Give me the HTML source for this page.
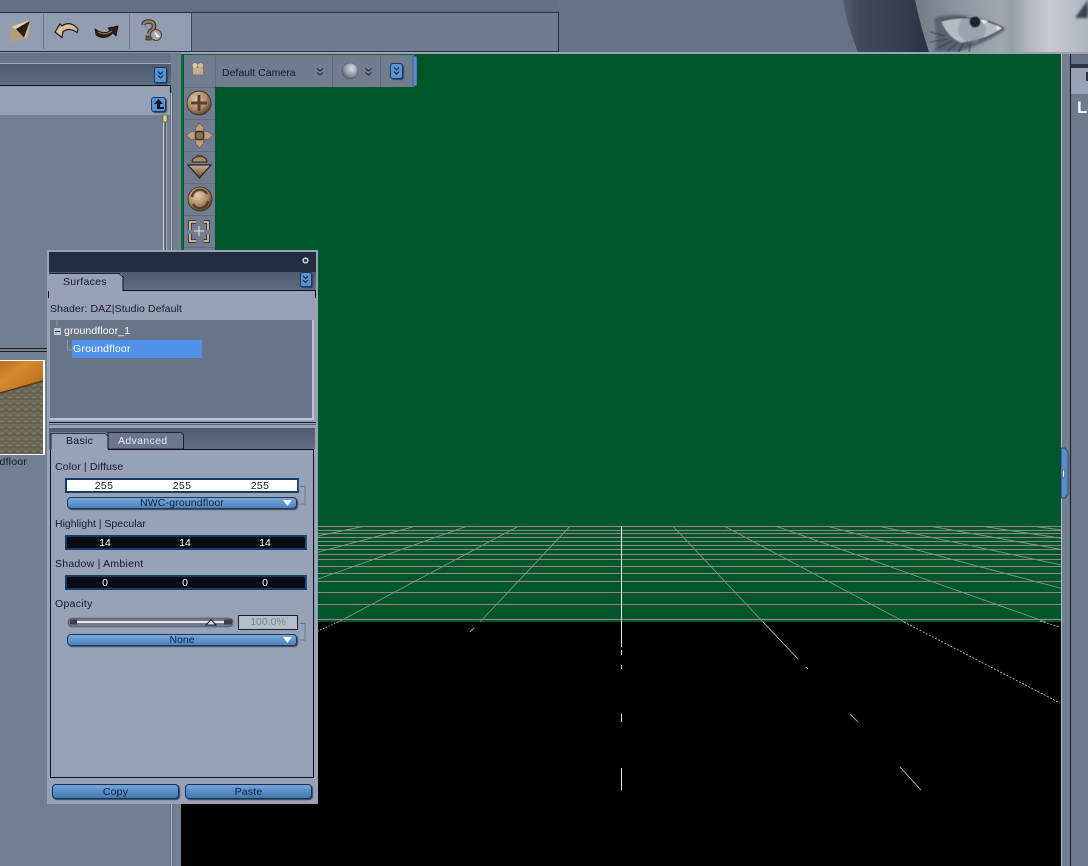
<!DOCTYPE html>
<html>
<head>
<meta charset="utf-8">
<style>
html,body{margin:0;padding:0;background:#6f7a8d;}
#r{position:relative;width:1088px;height:866px;overflow:hidden;font-family:"Liberation Sans",sans-serif;font-size:10.5px;color:#141824;background:#6f7a8d;}
#r div{position:absolute;box-sizing:border-box;}
.t{white-space:nowrap;line-height:12px;}
.c{transform:translateX(-50%);}
.fld{border:2px solid #123a6a;border-right-color:#1d4f8c;}
.dd{height:12px;border:1px solid #1a3a66;border-radius:4px;background:linear-gradient(#7aa6d6,#5c93cc 60%,#4d82bc);box-shadow:1px 1px 1px #3a4354;text-align:center;line-height:10px;color:#10203a;}
.btn{height:15px;border:1px solid #123058;border-radius:4px;background:linear-gradient(#76a4d6,#5389c4 60%,#447ab4);box-shadow:1px 1px 1px #3a4354;text-align:center;line-height:14px;letter-spacing:.2px;color:#10203a;}
.chev{border:1px solid #173a68;border-radius:2px;background:#5b93d0;box-shadow:1px 1px 1px #39414f;}
svg{position:absolute;left:0;top:0;}
</style>
</head>
<body>
<div id="r">
<svg width="1088" height="866" viewBox="0 0 1088 866">
<defs>
<linearGradient id="skin" gradientUnits="userSpaceOnUse" x1="915" x2="1088" y1="0" y2="0"><stop offset="0" stop-color="#747986"/><stop offset=".25" stop-color="#8f94a0"/><stop offset=".5" stop-color="#a3a7b1"/><stop offset=".56" stop-color="#989ca8"/><stop offset=".66" stop-color="#b6b9c2"/><stop offset=".78" stop-color="#c8cad0"/><stop offset="1" stop-color="#b2b5bf"/></linearGradient>
<linearGradient id="hair" x1="0" x2="1" y1="0" y2="0"><stop offset="0" stop-color="#565f71"/><stop offset=".18" stop-color="#414a5b"/><stop offset=".7" stop-color="#363d4e"/><stop offset="1" stop-color="#2c3241"/></linearGradient>
<radialGradient id="br" cx=".4" cy=".35" r=".7"><stop offset="0" stop-color="#e2cdb0"/><stop offset=".6" stop-color="#a98a68"/><stop offset="1" stop-color="#4d3a28"/></radialGradient>
<radialGradient id="ball" cx=".6" cy=".35" r=".75"><stop offset="0" stop-color="#d9dde4"/><stop offset=".5" stop-color="#99a1af"/><stop offset="1" stop-color="#474f5f"/></radialGradient>
<linearGradient id="thumbTop" x1="0" x2="1" y1="0" y2="1"><stop offset="0" stop-color="#b9701f"/><stop offset=".35" stop-color="#d58a2f"/><stop offset=".75" stop-color="#c0741f"/><stop offset="1" stop-color="#8a3c10"/></linearGradient>
<pattern id="cob" patternUnits="userSpaceOnUse" width="8" height="6"><rect width="8" height="6" fill="#686653"/><ellipse cx="2" cy="1.500" rx="2" ry="1.200" fill="#7b7965"/><ellipse cx="6" cy="4.500" rx="2" ry="1.200" fill="#74725e"/><path d="M0 3H8" stroke="#504e3f" stroke-width=".6"/></pattern>
<linearGradient id="tabbar" x1="0" x2="0" y1="0" y2="1"><stop offset="0" stop-color="#4f5a6e"/><stop offset="1" stop-color="#626d82"/></linearGradient>
<linearGradient id="arrow" x1="0" x2="0" y1="0" y2="1"><stop offset="0" stop-color="#d0b898"/><stop offset="1" stop-color="#5c452e"/></linearGradient>
<filter id="b05" x="-20%" y="-20%" width="140%" height="140%"><feGaussianBlur stdDeviation=".5"/></filter>
<filter id="b1" x="-30%" y="-30%" width="160%" height="160%"><feGaussianBlur stdDeviation="1.200"/></filter>
<clipPath id="face"><rect x="843" y="0" width="245" height="52"/></clipPath>
<clipPath id="vpg"><rect x="318" y="526" width="743" height="97"/></clipPath>
</defs>

<!-- top chrome -->
<rect width="1088" height="52" fill="#687285"/>
<rect x="0" y="0" width="558" height="12" fill="#667084"/>
<rect x="0" y="12" width="558" height="1" fill="#283040"/>
<rect x="0" y="13" width="191" height="38" fill="#929db3"/>
<rect x="191" y="13" width="367" height="38" fill="#727c90"/>
<rect x="191" y="13" width="1" height="38" fill="#3b4454"/>
<rect x="558" y="12" width="1" height="40" fill="#283040"/>
<rect x="0" y="51" width="558" height="1" fill="#283040"/>
<rect x="43" y="14" width="1" height="35" fill="#6a7488"/>
<rect x="129" y="14" width="1" height="35" fill="#6a7488"/>

<!-- face -->
<g clip-path="url(#face)">
<rect x="915" y="0" width="173" height="52" fill="url(#skin)"/>
<path d="M843 0L915 0Q921 28 929 52L858 52Q847 25 843 0Z" fill="url(#hair)"/>
<path d="M934 18Q965 8 1006 29Q985 44 958 52L934 52Q938 34 934 18Z" fill="#5b6170" filter="url(#b1)"/>
<g filter="url(#b05)">
<path d="M941 21Q973 12 1003 28Q985 41 962 43Q948 38 941 21Z" fill="#b7bac3"/>
<ellipse cx="972" cy="29" rx="14" ry="13.500" fill="#9da2ae"/>
<path d="M941 21Q973 12 1003 28" fill="none" stroke="#3c4150" stroke-width="1.200"/>
<path d="M962 43Q985 41 1003 28" fill="none" stroke="#4d5261" stroke-width="1.200"/>
<circle cx="975" cy="22" r="5.500" fill="#1c2029"/>
<path d="M980 19L988 21L984 24Z" fill="#eff0f3"/>
<path d="M996 25L1002 28L997 31Z" fill="#dfe1e6"/>
<g stroke="#2e3340" stroke-width=".8" fill="none"><path d="M945 36L930 32M948 39L930 42M952 41L938 48M957 43L947 52M963 44L958 53M970 44L969 53"/></g>
</g>
<path d="M1075 18Q1082 8 1088 0L1088 18Z" fill="#3c4150" filter="url(#b1)"/>
</g>

<rect x="0" y="52" width="1088" height="2" fill="#9aa4b8"/>
<rect x="0" y="52" width="181" height="814" fill="#737e91"/>
<rect x="0" y="52" width="181" height="1" fill="#8c96aa"/>

<!-- viewport -->
<rect x="181" y="54" width="880" height="569" fill="#00562b"/>
<rect x="181" y="622" width="880" height="244" fill="#000"/>
<g stroke="#8c8985" stroke-width="1" fill="none" shape-rendering="crispEdges">
<path d="M318 526.500H1061M318 530.500H1061M318 533.500H1061M318 537.500H1061M318 541.500H1061M318 545.500H1061M318 549.500H1061M318 554.500H1061M318 559.500H1061M318 566.500H1061M318 573.500H1061M318 581.500H1061M318 592.500H1061M318 604.500H1061M318 619.500H1061"/>
</g>
<g clip-path="url(#vpg)" stroke="#8c8f8a" stroke-width=".9" fill="none">
<path d="M570.200 526L480 622M518.900 526L338.500 622M467.600 526L197 622M416.300 526L55.500 622M365 526L-86 622M672.800 526L763 622M724.100 526L904.500 622M775.400 526L1046 622M826.700 526L1187.500 622M878 526L1329 622M929.300 526L1470.500 622M980.600 526L1612 622M1031.900 526L1753.500 622"/>
</g>
<g fill="none" stroke="#e8e8e8">
<path d="M621.500 526V647M621.500 650V655M621.500 665V669M621.500 714V722M621.500 768V790"/>
</g>
<g fill="none" stroke="#c8c8c8" stroke-width=".8">
<path d="M904 622L1060 703" stroke-dasharray="2 1.500"/>
<path d="M1040 621L1060 627" stroke-dasharray="2 1.500"/>
<path d="M763 622L798 659M806 667L808 669M850 714L858 722M900 767L921 790M474 628L470 632"/>
<path d="M338 622L318 631" stroke-dasharray="1.500 1.500"/>
</g>

<!-- viewport toolbar -->
<rect x="181" y="54" width="2" height="200" fill="#0a6b3a"/>
<rect x="184" y="55" width="230" height="32" fill="#616c80"/>
<rect x="184" y="55" width="31" height="198" fill="#616c80"/>
<rect x="184" y="55" width="31" height="32" fill="#727c90"/>
<rect x="216" y="55" width="116" height="32" fill="#727c90"/>
<rect x="333" y="55" width="47" height="32" fill="#727c90"/>
<rect x="381" y="55" width="33" height="32" fill="#727c90"/>
<rect x="413" y="56" width="4" height="30" rx="1" fill="#5b8cc6" stroke="#1d3a66" stroke-width=".5"/>
<g fill="#727c90"><rect x="184" y="88" width="31" height="31"/><rect x="184" y="120" width="31" height="31"/><rect x="184" y="152" width="31" height="31"/><rect x="184" y="184" width="31" height="31"/><rect x="184" y="216" width="31" height="31"/><rect x="184" y="248" width="31" height="5"/></g>

<!-- camera icon -->
<g><circle cx="195" cy="65.500" r="2.800" fill="#dccab0" stroke="#7d6a52" stroke-width=".5"/><circle cx="200.500" cy="65.500" r="2.800" fill="#cfbca0" stroke="#7d6a52" stroke-width=".5"/><rect x="193" y="68" width="10" height="6.500" fill="#c2ad90"/><path d="M203 70L207 68V74L203 72Z" fill="#8f7a62"/><path d="M195 74.500L194 78M201 74.500L202 78" stroke="#7d6a52" stroke-width="1.200"/></g>
<!-- ball -->
<circle cx="350" cy="71" r="8" fill="url(#ball)" stroke="#4a5262" stroke-width=".5"/>
<!-- bronze tools -->
<circle cx="199" cy="103" r="12" fill="url(#br)" stroke="#4a3828"/>
<path d="M199 95V111M191 103H207" stroke="#5a4028" stroke-width="3"/>
<path d="M199.500 123L203.500 127.500L203 132L208 131.500L213 135.500L208 139.500L203 139L203.500 143.500L199.500 148L195.500 143.500L196 139L191 139.500L186 135.500L191 131.500L196 132L195.500 127.500Z" fill="#bca282" stroke="#6a5238" stroke-width=".6"/>
<rect x="195.500" y="131.500" width="8" height="8" rx="2" fill="#8a6f52" stroke="#3f2d1c" stroke-width="1.400"/>
<path d="M192 162Q192 157 199.500 156.500Q207 157 207 162Z" fill="#a88c6c" stroke="#2e2012"/>
<rect x="196" y="155" width="7" height="2" fill="#5c452e"/>
<path d="M188 165H211L199.500 178Z" fill="url(#arrow)" stroke="#2e2012" stroke-width="1.200"/>
<circle cx="200" cy="199" r="12" fill="url(#br)" stroke="#4a3828"/>
<path d="M192 197A8 8 0 0 1 207 194M208 201A8 8 0 0 1 193 204" fill="none" stroke="#57402a" stroke-width="2.400"/>
<g fill="none" stroke="#2e2214" stroke-width="3.400"><path d="M196 222H190V230M204 222H208V230M190 234V241H196M208 234V241H204"/></g>
<g fill="none" stroke="#dcc8aa" stroke-width="1.700"><path d="M196 222H190V230M204 222H208V230M190 234V241H196M208 234V241H204"/></g>
<path d="M199 226V236M194 231H204" stroke="#efe5d2"/>

<!-- top toolbar icons -->
<path d="M11 27L30 20L28 38L10 42Z" fill="#b59c7e"/>
<path d="M30 20L11 27L16 29Z" fill="#e4d2b6"/>
<path d="M30 21L16 29L24 37.500Z" fill="#2a1c12"/>
<path d="M30 21L24 37.500L28 38Z" fill="#c9b08e"/>
<path d="M78 29Q70 20 62 26L60 24L55 32L62 37.500L63 31.500Q70 27 77 32.500Z" fill="#d8c2a2" stroke="#241a10" stroke-width="1.200"/>
<path d="M95 29Q103 35 110 31L108 28L118 26L116 36L113 33Q105 41 96 35Z" fill="#2a2015" stroke="#1a130b" stroke-width=".8"/>
<path d="M98 32Q105 36 112 31" fill="none" stroke="#8a7458" stroke-width="1.200"/>
<path d="M143.500 25Q144 21.500 148.500 21.500Q154 21.500 154 26Q154 30 150.500 31L149 34" fill="none" stroke="#3a2e22" stroke-width="4.600"/>
<path d="M143.500 25Q144 21.500 148.500 21.500Q154 21.500 154 26Q154 30 150.500 31L149 34" fill="none" stroke="#8e7b66" stroke-width="2.400"/>
<rect x="146" y="36" width="5" height="4" fill="#6c5a48" stroke="#3a2e22" stroke-width=".8"/>
<circle cx="156" cy="35" r="5.500" fill="#a8a49c" stroke="#4a4034"/>
<path d="M154 31L160 37L157 37L158 40Z" fill="#fff"/>

<!-- left panel -->
<rect x="0" y="53" width="171" height="10" fill="#687285"/>
<rect x="0" y="63" width="171" height="1" fill="#a2abbe"/>
<rect x="0" y="64" width="171" height="21" fill="url(#tabbar)"/>
<rect x="0" y="85" width="171" height="1" fill="#0e1118"/>
<rect x="170" y="85" width="1" height="8" fill="#0e1118"/>
<rect x="0" y="86" width="170" height="29" fill="#95a0b5"/>
<rect x="163" y="115" width="1" height="135" fill="#c8ccd4"/>
<rect x="165" y="115" width="1" height="135" fill="#4a5364"/>
<rect x="166" y="115" width="1" height="135" fill="#a4acbb"/>
<rect x="163" y="115" width="4" height="7" fill="#e8e070" stroke="#444" stroke-width=".6"/>
<rect x="170" y="93" width="1" height="773" fill="#5a6476"/>
<rect x="171" y="93" width="1" height="773" fill="#c4cad6"/>
<rect x="172" y="93" width="1" height="773" fill="#5a6476"/>
<rect x="0" y="348" width="47" height="1" fill="#1a1f2a"/>
<rect x="0" y="351" width="47" height="1" fill="#1a1f2a"/>

<!-- thumbnail -->
<rect x="0" y="360" width="45" height="95" fill="#fff"/>
<rect x="0" y="361" width="43" height="93" fill="url(#cob)"/>
<path d="M0 361H43V381L0 393Z" fill="url(#thumbTop)"/>
<path d="M0 393L43 381" stroke="#4f3a20" stroke-width="1.500"/>

<!-- right side -->
<rect x="1061" y="54" width="1" height="812" fill="#b3bac8"/>
<rect x="1062" y="54" width="8" height="812" fill="#737e91"/>
<rect x="1070" y="54" width="1" height="812" fill="#111722"/>
<rect x="1071" y="54" width="17" height="812" fill="#6f7a8d"/>
<rect x="1071" y="54" width="17" height="10" fill="#687285"/>
<rect x="1071" y="64" width="17" height="4" fill="#2f3748"/>
<rect x="1071" y="68" width="17" height="26" fill="#99a3b8"/>
<rect x="1086" y="72" width="2" height="9" fill="#333"/>
<path d="M1061 448H1065L1068 452V494L1065 498H1061Z" fill="#5b8cc6" stroke="#1d3a66" stroke-width=".8"/>
<rect x="1062.500" y="470" width="2" height="7" fill="#fff" stroke="#123" stroke-width=".4"/>

<!-- surfaces panel -->
<rect x="47" y="250" width="271" height="554" fill="#98a2b7"/>
<rect x="49" y="252" width="267" height="20" fill="#222c3f"/>
<circle cx="305.500" cy="260.500" r="2.300" fill="none" stroke="#c8ced8" stroke-width="1.600"/>
<rect x="49" y="272" width="267" height="19" fill="url(#tabbar)"/>
<path d="M49 298V274H121L123 276V290.500H315.500V298" fill="#98a2b7"/>
<rect x="49" y="291" width="267" height="7" fill="#98a2b7"/>
<path d="M123 276V290.500H315.500V298" fill="none" stroke="#0c0f16"/>
<path d="M48.500 298V291" stroke="#0c0f16"/>
<path d="M49 273.500H119L123 277" fill="none" stroke="#0c0f16" stroke-width=".8"/>
<rect x="50" y="320" width="263" height="99" fill="#697488"/>
<path d="M313 320V419H50" fill="none" stroke="#bcc3d0" stroke-width="2"/>
<rect x="72" y="340" width="130" height="18" fill="#5092ea"/>
<rect x="53.500" y="327.500" width="8" height="8" fill="#c0c6d2" stroke="#6f7788"/>
<path d="M55 331.500H60" stroke="#2a2f3a"/>
<path d="M57 320V327M67.500 340V350H72" fill="none" stroke="#8d96a8"/>
<rect x="49" y="422" width="267" height="1" fill="#101420"/>
<rect x="49" y="424" width="267" height="1" fill="#5a6478"/>
<rect x="49" y="428" width="266" height="21" fill="url(#tabbar)"/>
<rect x="50.500" y="449.500" width="263" height="328" fill="#98a2b7" stroke="#0c0f16"/>
<path d="M108 449V435L106 432.500H51V449H108Z" fill="#98a2b7"/>
<path d="M108 432.500H181L183.500 435V449H108Z" fill="#6c778c" stroke="#0c0f16" stroke-width=".8"/>
<path d="M51 449V433.500H105L108 436V449.500" fill="none" stroke="#0c0f16" stroke-width=".8"/>
<rect x="51" y="449" width="57" height="2" fill="#98a2b7"/>
<g fill="none" stroke="#6c7488"><path d="M300 486.500H305V504H300M300 623.500H305V640H300"/></g>

<!-- slider -->
<rect x="68" y="618" width="165" height="9" rx="4" fill="#6f7788" stroke="#454c5a" stroke-width=".6"/>
<rect x="70" y="621" width="161" height="2" fill="#e6e9ee"/>
<rect x="70" y="619.500" width="7" height="5" fill="#3a3f4a"/>
<rect x="224" y="619.500" width="8" height="5" fill="#3a3f4a"/>
<path d="M206 625L211 619.500L216 625Z" fill="#d6dce6" stroke="#10203a"/>
</svg>

<!-- chevron buttons -->
<div class="chev" style="left:154px;top:67px;width:13px;height:16px"></div>
<div class="chev" style="left:151px;top:97px;width:15px;height:15px;border-radius:3px"></div>
<div class="chev" style="left:390px;top:63px;width:13px;height:16px;border-radius:3px"></div>
<div class="chev" style="left:300px;top:272px;width:12px;height:15px"></div>
<svg width="1088" height="866" viewBox="0 0 1088 866">
<g fill="none" stroke="#11203a" stroke-width="1">
<path d="M158 71.500L160.500 74L163 71.500M158 75.500L160.500 78L163 75.500"/>
<path d="M394 67.500L396.500 70L399 67.500M394 71.500L396.500 74L399 71.500"/>
<path d="M303 276L305.500 278.500L308 276M303 280L305.500 282.500L308 280"/>
<path d="M317 68.500L320 71L323 68.500M317 72.500L320 75L323 72.500"/>
<path d="M365.500 68.500L368.500 71L371.500 68.500M365.500 72.500L368.500 75L371.500 72.500"/>
</g>
<path d="M158.500 99L154 104H157V109H164V107H160V104H163Z" fill="#0e1522"/>
</svg>

<!-- text -->
<div class="t" style="left:222px;top:67px;">Default Camera</div>
<div class="t" style="right:1061px;top:456px;letter-spacing:.2px">groundfloor</div>
<div class="t" style="left:63px;top:276px;letter-spacing:.3px">Surfaces</div>
<div class="t" style="left:50px;top:303px;letter-spacing:.1px">Shader: DAZ|Studio Default</div>
<div class="t" style="left:64px;top:325px;color:#fff;letter-spacing:.1px">groundfloor_1</div>
<div class="t" style="left:73px;top:343px;color:#fff;letter-spacing:.2px">Groundfloor</div>
<div class="t" style="left:66px;top:435px;letter-spacing:.3px">Basic</div>
<div class="t" style="left:118px;top:435px;color:#e4e8ee;letter-spacing:.35px">Advanced</div>
<div class="t" style="left:55px;top:461px;letter-spacing:.15px">Color | Diffuse</div>
<div class="t" style="left:55px;top:518px;">Highlight | Specular</div>
<div class="t" style="left:55px;top:558px;letter-spacing:.25px">Shadow | Ambient</div>
<div class="t" style="left:55px;top:598px;letter-spacing:.3px">Opacity</div>

<div class="fld" style="left:65px;top:478px;width:234px;height:15px;background:#fff"></div>
<div class="t c" style="left:104px;top:480px;letter-spacing:.3px">255</div>
<div class="t c" style="left:182px;top:480px;letter-spacing:.3px">255</div>
<div class="t c" style="left:260px;top:480px;letter-spacing:.3px">255</div>
<div class="dd" style="left:67px;top:497px;width:230px;letter-spacing:.15px">NWC-groundfloor</div>

<div class="fld" style="left:65px;top:535px;width:242px;height:15px;background:#0b0d12"></div>
<div class="t c" style="left:105px;top:537px;color:#fff">14</div>
<div class="t c" style="left:185px;top:537px;color:#fff">14</div>
<div class="t c" style="left:265px;top:537px;color:#fff">14</div>

<div class="fld" style="left:65px;top:575px;width:242px;height:15px;background:#0b0d12"></div>
<div class="t c" style="left:105px;top:577px;color:#fff">0</div>
<div class="t c" style="left:185px;top:577px;color:#fff">0</div>
<div class="t c" style="left:265px;top:577px;color:#fff">0</div>

<div style="left:238px;top:615px;width:60px;height:15px;background:#b6bdcb;border:1px solid #1a1e28"></div>
<div class="t c" style="left:268px;top:616px;color:#7a8294">100.0%</div>
<div class="dd" style="left:67px;top:634px;width:230px;">None</div>

<div class="btn" style="left:52px;top:784px;width:127px;">Copy</div>
<div class="btn" style="left:185px;top:784px;width:127px;">Paste</div>

<div class="t" style="left:1077px;top:99px;font-size:17px;font-weight:bold;color:#f2f4f8;line-height:17px">L</div>

<svg width="1088" height="866" viewBox="0 0 1088 866"><path d="M283 500H292L287.500 506Z" fill="#fff"/><path d="M283 637H292L287.500 643Z" fill="#fff"/></svg>
</div>
</body>
</html>
